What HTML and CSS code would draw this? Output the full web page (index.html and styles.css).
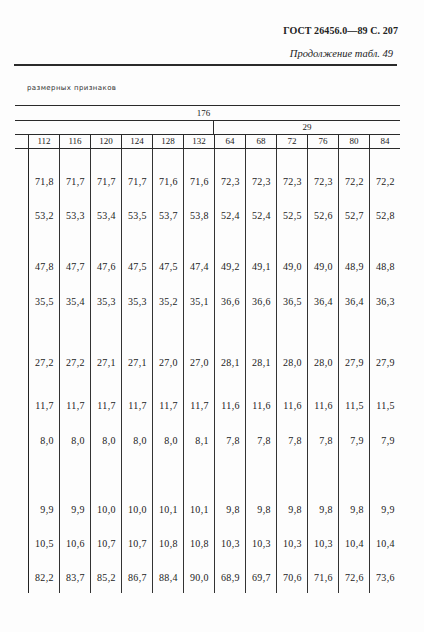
FILE: index.html
```html
<!DOCTYPE html>
<html lang="ru">
<head>
<meta charset="utf-8">
<link rel="stylesheet" href="styles.css">
</head>
<body>
<div class="page">
  <div class="gost">ГОСТ 26456.0—89 С. 207</div>
  <div class="cont">Продолжение табл. 49</div>
  <div class="rule"></div>
  <div class="caption">размерных признаков</div>

  <div class="thead">
    <div class="h176">176</div>
    <div class="h29"><div class="h29-empty"></div><div class="h29-cell">29</div></div>
    <div class="hcols">
      <div class="hgap"></div>
      <div class="hc">112</div><div class="hc">116</div><div class="hc">120</div><div class="hc">124</div><div class="hc">128</div><div class="hc">132</div>
      <div class="hc">64</div><div class="hc">68</div><div class="hc">72</div><div class="hc">76</div><div class="hc">80</div><div class="hc">84</div>
    </div>
  </div>

  <div class="tbody">
    <div>71,8</div><div>71,7</div><div>71,7</div><div>71,7</div><div>71,6</div><div>71,6</div><div>72,3</div><div>72,3</div><div>72,3</div><div>72,3</div><div>72,2</div><div>72,2</div>
    <div>53,2</div><div>53,3</div><div>53,4</div><div>53,5</div><div>53,7</div><div>53,8</div><div>52,4</div><div>52,4</div><div>52,5</div><div>52,6</div><div>52,7</div><div>52,8</div>
    <div>47,8</div><div>47,7</div><div>47,6</div><div>47,5</div><div>47,5</div><div>47,4</div><div>49,2</div><div>49,1</div><div>49,0</div><div>49,0</div><div>48,9</div><div>48,8</div>
    <div>35,5</div><div>35,4</div><div>35,3</div><div>35,3</div><div>35,2</div><div>35,1</div><div>36,6</div><div>36,6</div><div>36,5</div><div>36,4</div><div>36,4</div><div>36,3</div>
    <div>27,2</div><div>27,2</div><div>27,1</div><div>27,1</div><div>27,0</div><div>27,0</div><div>28,1</div><div>28,1</div><div>28,0</div><div>28,0</div><div>27,9</div><div>27,9</div>
    <div>11,7</div><div>11,7</div><div>11,7</div><div>11,7</div><div>11,7</div><div>11,7</div><div>11,6</div><div>11,6</div><div>11,6</div><div>11,6</div><div>11,5</div><div>11,5</div>
    <div>8,0</div><div>8,0</div><div>8,0</div><div>8,0</div><div>8,0</div><div>8,1</div><div>7,8</div><div>7,8</div><div>7,8</div><div>7,8</div><div>7,9</div><div>7,9</div>
    <div>9,9</div><div>9,9</div><div>10,0</div><div>10,0</div><div>10,1</div><div>10,1</div><div>9,8</div><div>9,8</div><div>9,8</div><div>9,8</div><div>9,8</div><div>9,9</div>
    <div>10,5</div><div>10,6</div><div>10,7</div><div>10,7</div><div>10,8</div><div>10,8</div><div>10,3</div><div>10,3</div><div>10,3</div><div>10,3</div><div>10,4</div><div>10,4</div>
    <div>82,2</div><div>83,7</div><div>85,2</div><div>86,7</div><div>88,4</div><div>90,0</div><div>68,9</div><div>69,7</div><div>70,6</div><div>71,6</div><div>72,6</div><div>73,6</div>
  </div>
</div>
</body>
</html>
```

FILE: styles.css
```css
html, body {
  margin: 0;
  padding: 0;
  background: #fdfdfd;
}

body {
  font-family: "Liberation Serif", "DejaVu Serif", serif;
  color: #222;
}

.page {
  width: 424px;
  height: 632px;
  overflow: hidden;
}

.gost {
  margin-top: 24px;
  padding-right: 26px;
  text-align: right;
  font-size: 10px;
  font-weight: bold;
  line-height: 13px;
  letter-spacing: 0.1px;
}

.cont {
  margin-top: 10px;
  padding-right: 31px;
  text-align: right;
  font-size: 10.5px;
  font-style: italic;
  line-height: 13px;
}

.rule {
  margin-top: 4px;
  margin-left: 14px;
  width: 383px;
  height: 2px;
  background: #2a2a2a;
}

.caption {
  margin-top: 18px;
  margin-left: 27px;
  font-family: "DejaVu Sans", sans-serif;
  font-size: 7px;
  line-height: 9px;
  letter-spacing: 0.4px;
  color: #333;
}

.thead {
  margin-top: 12px;
  margin-left: 15px;
  width: 385px;
  border-top: 1px solid #2a2a2a;
  font-size: 9px;
}

.h176 {
  height: 14px;
  line-height: 14px;
  text-align: center;
  padding-right: 8px;
  border-bottom: 1px solid #2a2a2a;
}

.h29 {
  display: flex;
  height: 13px;
  line-height: 13px;
  border-bottom: 1px solid #2a2a2a;
}

.h29-empty {
  width: 198px;
}

.h29-cell {
  flex: 1;
  border-left: 1px solid #2a2a2a;
  text-align: center;
}

.hcols {
  display: flex;
  height: 13px;
  line-height: 13px;
  border-bottom: 1px solid #2a2a2a;
}

.hgap {
  width: 13px;
}

.hc {
  width: 30px;
  border-left: 1px solid #2a2a2a;
  text-align: center;
}

.tbody {
  margin-left: 28px;
  width: 372px;
  display: grid;
  grid-template-columns: repeat(12, 31px);
  grid-template-rows: 60px 51px 35px 61px 43px 35px 69px 34px 34px 22px;
  font-size: 10px;
  letter-spacing: 0.4px;
}

.tbody > div {
  border-left: 1px solid #333;
  text-align: right;
  padding-right: 5px;
  line-height: 14px;
}

.tbody > div:nth-child(-n+12) {
  padding-top: 26px;
}

.tbody > div:nth-child(12n+1) {
  border-left: 1.5px solid #222;
}
```
